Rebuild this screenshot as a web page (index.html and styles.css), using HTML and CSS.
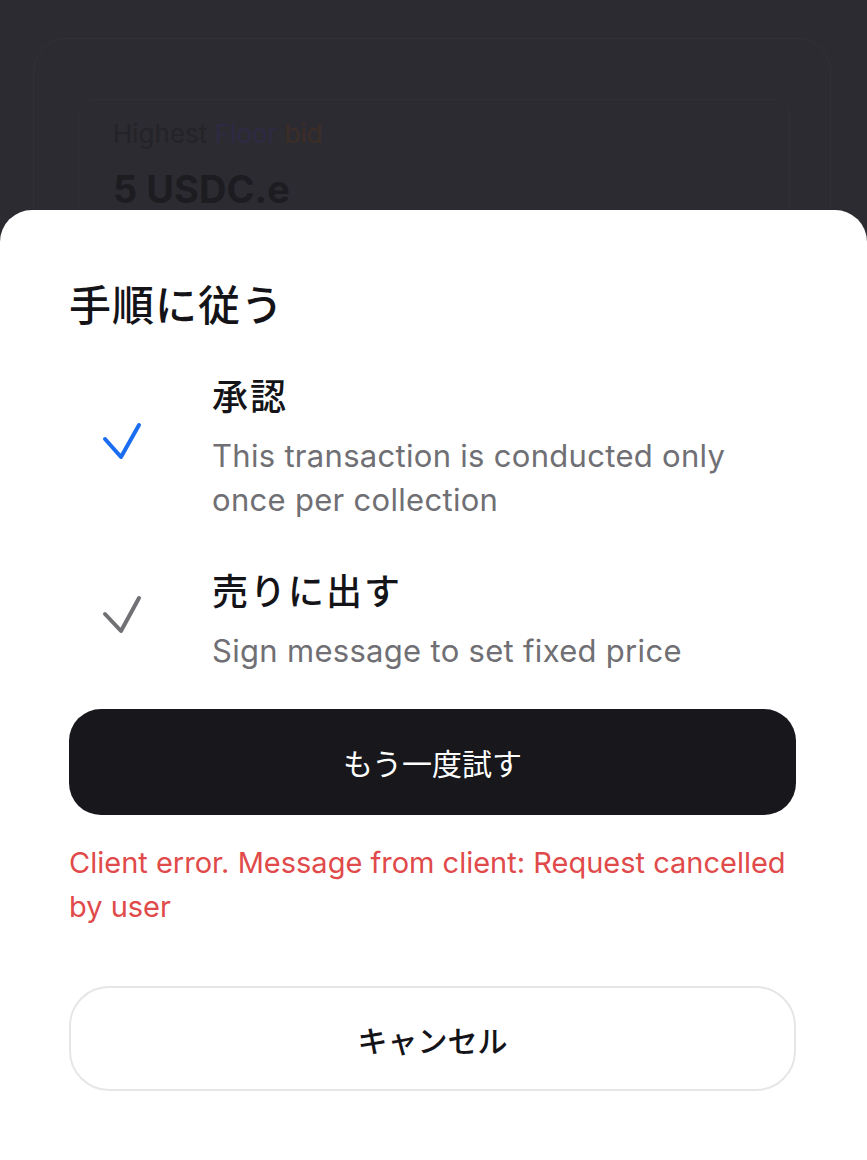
FILE: index.html
```html
<!DOCTYPE html>
<html lang="ja">
<head>
    <meta charset="UTF-8">
    <meta name="viewport" content="width=device-width, initial-scale=1.0">
    <title>手順に従う</title>
    <link rel="stylesheet" href="styles.css">
</head>
<body>
    <div class="backdrop">
        <div class="outer-card">
            <div class="inner-card">
                <div class="bid-label">Highest <span class="floor">Floor</span> <span class="bid">bid</span></div>
                <div class="bid-value">5 USDC.e</div>
            </div>
        </div>
    </div>

    <div class="sheet">
        <h1>手順に従う</h1>

        <div class="steps">
            <div class="step">
                <svg class="check done" viewBox="0 0 40 40" width="40" height="40">
                    <polyline points="3,17 19,35 37,3" fill="none" stroke="currentColor" stroke-width="4" stroke-linecap="round" stroke-linejoin="round"/>
                </svg>
                <div class="step-text">
                    <div class="step-title">承認</div>
                    <div class="step-desc">This transaction is conducted only once per collection</div>
                </div>
            </div>
            <div class="step">
                <svg class="check pending" viewBox="0 0 40 40" width="40" height="40">
                    <polyline points="3,19 19,36 37,3" fill="none" stroke="currentColor" stroke-width="4" stroke-linecap="round" stroke-linejoin="round"/>
                </svg>
                <div class="step-text">
                    <div class="step-title">売りに出す</div>
                    <div class="step-desc">Sign message to set fixed price</div>
                </div>
            </div>
        </div>

        <button class="btn btn-primary">もう一度試す</button>
        <p class="error">Client error. Message from client: Request cancelled by user</p>
        <button class="btn btn-secondary">キャンセル</button>
    </div>
</body>
</html>
```

FILE: styles.css
```css
body {
    margin: 0;
    background-color: #2c2b31;
    font-family: 'Inter', 'Noto Sans CJK JP', sans-serif;
    color: #141418;
    height: 1160px;
    overflow: hidden;
}
.backdrop {
    height: 210px;
    padding: 38px 36px 0 33px;
    box-sizing: border-box;
    overflow: hidden;
}
.outer-card {
    border: 1px solid #323137;
    border-radius: 34px;
    padding: 60px 40px 0 44px;
    height: 300px;
}
.inner-card {
    border: 1px solid #302f35;
    border-radius: 14px;
    padding: 16px 34px;
    height: 300px;
}
.bid-label {
    font-size: 26px;
    color: #242328;
    line-height: 36px;
}
.bid-label .floor {
    color: #2d2a44;
}
.bid-label .bid {
    color: #3c2e27;
}
.bid-value {
    font-size: 38px;
    font-weight: 700;
    color: #1d1c21;
    margin-top: 19px;
    line-height: 36px;
}
.sheet {
    background: #fff;
    border-radius: 32px 32px 0 0;
    padding: 68px 60px 0 69px;
    height: 950px;
    box-sizing: border-box;
}
h1 {
    margin: 0;
    font-size: 42px;
    font-weight: 500;
    line-height: 56px;
    letter-spacing: 1px;
}
.steps {
    margin-top: 39px;
}
.step {
    display: flex;
    align-items: center;
    margin-bottom: 46px;
}
.check {
    flex: none;
    margin-left: 33px;
    margin-right: 70px;
    margin-top: -12px;
}
.check.done {
    color: #1a6cf0;
}
.check.pending {
    color: #707075;
}
.step-title {
    font-size: 36px;
    font-weight: 500;
    line-height: 48px;
    letter-spacing: 2px;
}
.step-desc {
    margin-top: 13px;
    font-size: 31px;
    line-height: 44px;
    letter-spacing: 0.3px;
    color: #6f6f74;
}
.steps .step:last-child {
    margin-bottom: 36px;
}
.btn {
    display: block;
    width: 727px;
    height: 106px;
    border-radius: 32px;
    font-family: 'Inter', 'Noto Sans CJK JP', sans-serif;
    font-size: 30px;
    cursor: pointer;
}
.btn-primary {
    background-color: #17171c;
    color: #fff;
    border: none;
}
.btn-secondary {
    background-color: #fff;
    color: #141418;
    border: 2px solid #e6e6e8;
    border-radius: 40px;
    height: 105px;
    font-weight: 500;
}
.error {
    margin: 26px 0 57px;
    font-size: 29px;
    line-height: 44px;
    color: #e04a4a;
}
```
